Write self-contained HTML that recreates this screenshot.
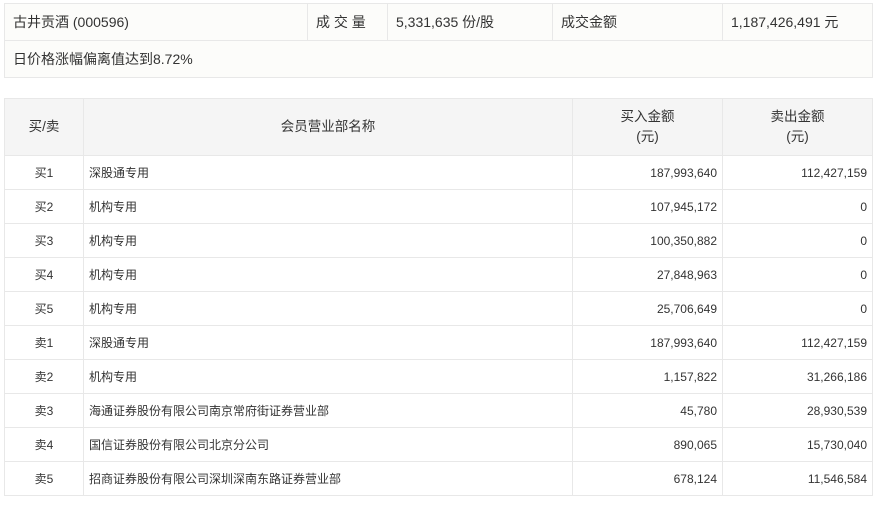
<!DOCTYPE html>
<html><head><meta charset="utf-8"><style>
body{margin:0;background:#fff;font-family:"Liberation Sans","Noto Sans CJK SC",sans-serif;color:#333;}
table{border-collapse:collapse;position:absolute;left:4px;width:868px;table-layout:fixed;}
td,th{border:1px solid #e8e8e8;padding:0 5px;font-weight:normal;}
#t1{top:3px;background:#fcfcfa;font-size:14px;}
#t1 td{height:36px;padding:0 8px;}
#t2{top:98px;font-size:12px;}
#t2 th{background:#f5f5f5;height:56px;line-height:20px;font-size:13.5px;}
#t2 td{height:33px;}
.c{text-align:center}.r{text-align:right}
</style></head><body>
<table id="t1">
<col style="width:303px"><col style="width:80px"><col style="width:165px"><col style="width:170px"><col style="width:150px">
<tr><td>古井贡酒 (000596)</td><td>成 交 量</td><td>5,331,635 份/股</td><td>成交金额</td><td>1,187,426,491 元</td></tr>
<tr><td colspan="5">日价格涨幅偏离值达到8.72%</td></tr>
</table>
<table id="t2">
<col style="width:79px"><col style="width:489px"><col style="width:150px"><col style="width:150px">
<tr><th>买/卖</th><th>会员营业部名称</th><th>买入金额<br>(元)</th><th>卖出金额<br>(元)</th></tr>
<tr><td class="c">买1</td><td>深股通专用</td><td class="r">187,993,640</td><td class="r">112,427,159</td></tr>
<tr><td class="c">买2</td><td>机构专用</td><td class="r">107,945,172</td><td class="r">0</td></tr>
<tr><td class="c">买3</td><td>机构专用</td><td class="r">100,350,882</td><td class="r">0</td></tr>
<tr><td class="c">买4</td><td>机构专用</td><td class="r">27,848,963</td><td class="r">0</td></tr>
<tr><td class="c">买5</td><td>机构专用</td><td class="r">25,706,649</td><td class="r">0</td></tr>
<tr><td class="c">卖1</td><td>深股通专用</td><td class="r">187,993,640</td><td class="r">112,427,159</td></tr>
<tr><td class="c">卖2</td><td>机构专用</td><td class="r">1,157,822</td><td class="r">31,266,186</td></tr>
<tr><td class="c">卖3</td><td>海通证券股份有限公司南京常府街证券营业部</td><td class="r">45,780</td><td class="r">28,930,539</td></tr>
<tr><td class="c">卖4</td><td>国信证券股份有限公司北京分公司</td><td class="r">890,065</td><td class="r">15,730,040</td></tr>
<tr><td class="c">卖5</td><td>招商证券股份有限公司深圳深南东路证券营业部</td><td class="r">678,124</td><td class="r">11,546,584</td></tr>
</table>
</body></html>
